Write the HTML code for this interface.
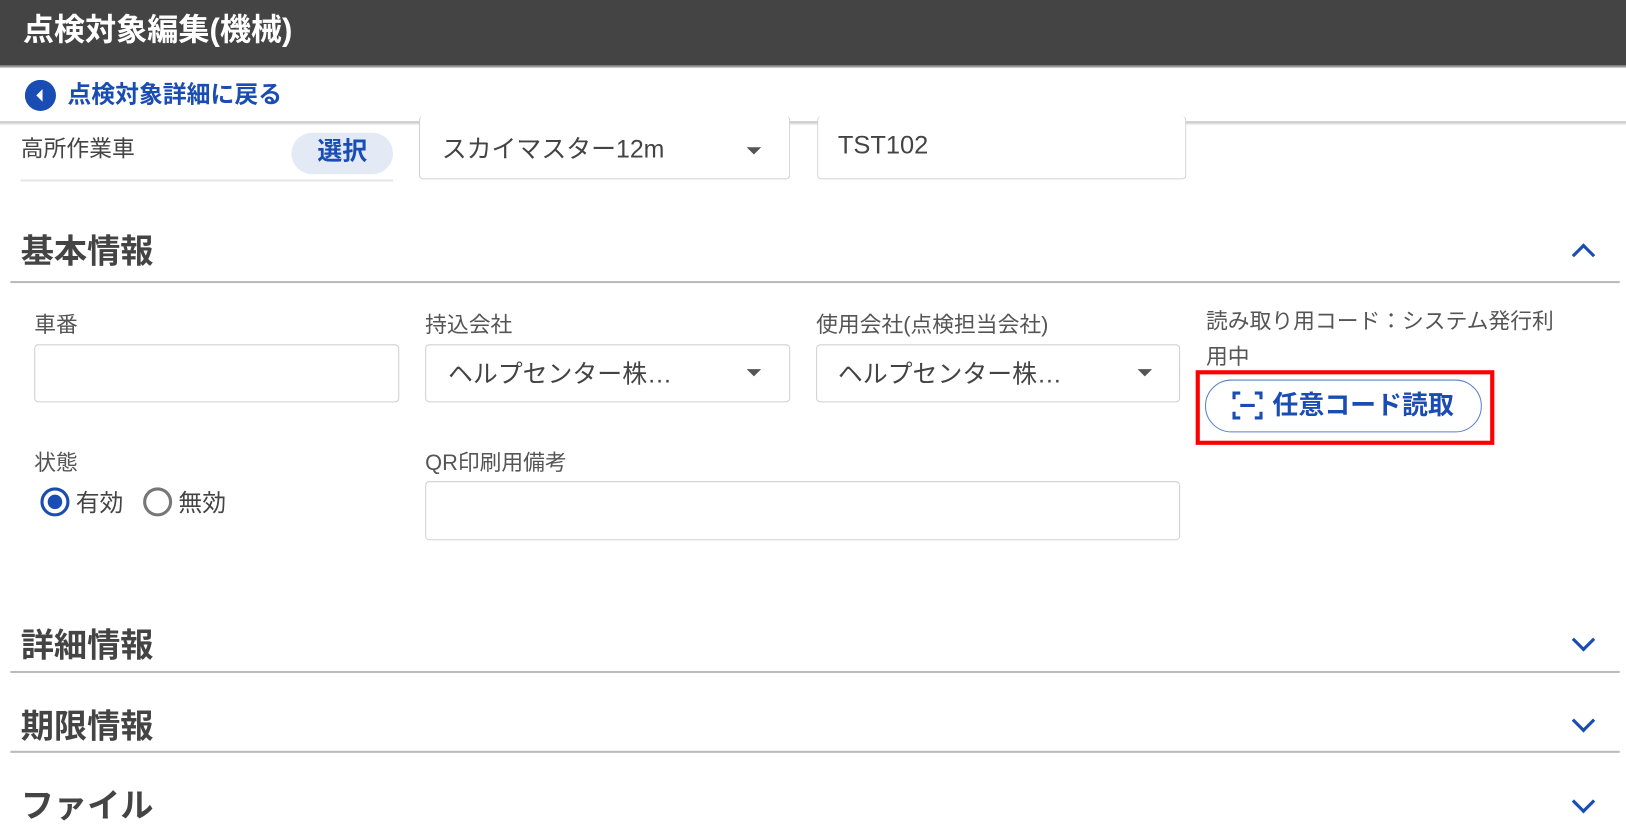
<!DOCTYPE html>
<html><head><meta charset="utf-8"><style>
*{margin:0;padding:0;box-sizing:border-box}
body{width:1626px;height:828px;overflow:hidden;background:#fff;font-family:"Liberation Sans","Noto Sans CJK JP",sans-serif;position:relative;color:#333}
#w{position:absolute;left:0;top:0;width:1568px;height:800px;transform:scale(1.037);transform-origin:0 0}
.a{position:absolute;white-space:nowrap}
.hdr{left:0;top:0;width:1568px;height:65px;background:#444;border-bottom:2px solid #999}
.box{position:absolute;border:1px solid #d0d0d0;border-radius:4px;background:#fff}
.lbl{font-size:21px;color:#555}
.sec{font-size:32px;font-weight:bold;color:#444}
.line{position:absolute;height:2px;background:#bbb;left:10px;width:1552px}
.tri{position:absolute;width:0;height:0;border-left:7px solid transparent;border-right:7px solid transparent;border-top:7px solid #555}
.chev{position:absolute;width:16px;height:16px;border-right:3px solid #1a4db3;border-bottom:3px solid #1a4db3}
</style></head><body><div id="w">
<div class="a hdr"></div>
<div class="a" style="left:22px;top:4px;font-size:30px;font-weight:bold;color:#fff">点検対象編集(機械)</div>
<div class="a" style="left:0;top:117px;width:1568px;height:4px;background:linear-gradient(#bbb,#fff)"></div>
<svg class="a" style="left:24px;top:77px" width="30" height="30"><circle cx="15" cy="15" r="15" fill="#1a4db3"/><path d="M17 9 L11 15 L17 21 Z" fill="#fff"/></svg>
<div class="a" style="left:65px;top:72px;font-size:23px;font-weight:bold;color:#1a4db3">点検対象詳細に戻る</div>

<div class="a" style="left:20px;top:126px;font-size:22px;color:#444">高所作業車</div>
<div class="a" style="left:281px;top:128px;width:98px;height:40px;border-radius:20px;background:#e3eaf6;color:#1a4db3;font-weight:bold;font-size:24px;text-align:center;line-height:38px">選択</div>
<div class="a" style="left:20px;top:173px;width:359px;height:2px;background:#e6e6e6"></div>
<div class="box" style="left:404px;top:112px;width:358px;height:61px;border-top:none"></div>
<div class="a" style="left:426px;top:124px;font-size:24px;color:#444">スカイマスター12m</div>
<div class="tri" style="left:720px;top:142px"></div>
<div class="box" style="left:788px;top:112px;width:356px;height:61px;border-top:none"></div>
<div class="a" style="left:808px;top:127px;font-size:24.5px;color:#444">TST102</div>

<div class="a sec" style="left:20px;top:217px">基本情報</div>
<div class="chev" style="left:1519px;top:238px;transform:rotate(-135deg)"></div>
<div class="line" style="top:271px"></div>

<div class="a lbl" style="left:33px;top:297px">車番</div>
<div class="box" style="left:33px;top:332px;width:352px;height:56px"></div>
<div class="a lbl" style="left:410px;top:297px">持込会社</div>
<div class="box" style="left:410px;top:332px;width:352px;height:56px"></div>
<div class="a" style="left:432px;top:341px;font-size:24px;color:#444">ヘルプセンター株…</div>
<div class="tri" style="left:720px;top:356px"></div>
<div class="a lbl" style="left:787px;top:297px">使用会社(点検担当会社)</div>
<div class="box" style="left:787px;top:332px;width:351px;height:56px"></div>
<div class="a" style="left:808px;top:341px;font-size:24px;color:#444">ヘルプセンター株…</div>
<div class="tri" style="left:1097px;top:356px"></div>
<div class="a lbl" style="left:1163px;top:294px;line-height:34px;white-space:normal;width:340px">読み取り用コード：システム発行利用中</div>
<div class="a" style="left:1153px;top:357px;width:288px;height:72px;border:4px solid #f00"></div>
<div class="a" style="left:1162px;top:366px;width:267px;height:51px;border:1.5px solid #5a80cc;border-radius:26px"></div>
<svg class="a" style="left:1188px;top:377px" width="30" height="28" fill="none" stroke="#1a4db3" stroke-width="3"><path d="M2 8V2H8M22 2H28V8M2 20V26H8M22 26H28V20M8 14H22"/></svg>
<div class="a" style="left:1227px;top:371px;font-size:25px;font-weight:bold;color:#1a4db3">任意コード読取</div>

<div class="a lbl" style="left:33px;top:430px">状態</div>
<svg class="a" style="left:38px;top:469px" width="30" height="30"><circle cx="15" cy="15" r="12.5" fill="none" stroke="#1a4db3" stroke-width="3"/><circle cx="15" cy="15" r="7" fill="#1a4db3"/></svg>
<div class="a" style="left:73px;top:466px;font-size:23px;color:#444">有効</div>
<svg class="a" style="left:137px;top:469px" width="30" height="30"><circle cx="15" cy="15" r="12.5" fill="none" stroke="#777" stroke-width="3"/></svg>
<div class="a" style="left:172px;top:466px;font-size:23px;color:#444">無効</div>
<div class="a lbl" style="left:410px;top:430px">QR印刷用備考</div>
<div class="box" style="left:410px;top:464px;width:728px;height:57px"></div>

<div class="a sec" style="left:20px;top:597px">詳細情報</div>
<div class="chev" style="left:1519px;top:609px;transform:rotate(45deg)"></div>
<div class="line" style="top:647px"></div>
<div class="a sec" style="left:20px;top:675px">期限情報</div>
<div class="chev" style="left:1519px;top:687px;transform:rotate(45deg)"></div>
<div class="line" style="top:724px"></div>
<div class="a sec" style="left:20px;top:752px">ファイル</div>
<div class="chev" style="left:1519px;top:765px;transform:rotate(45deg)"></div>
</div></body></html>
